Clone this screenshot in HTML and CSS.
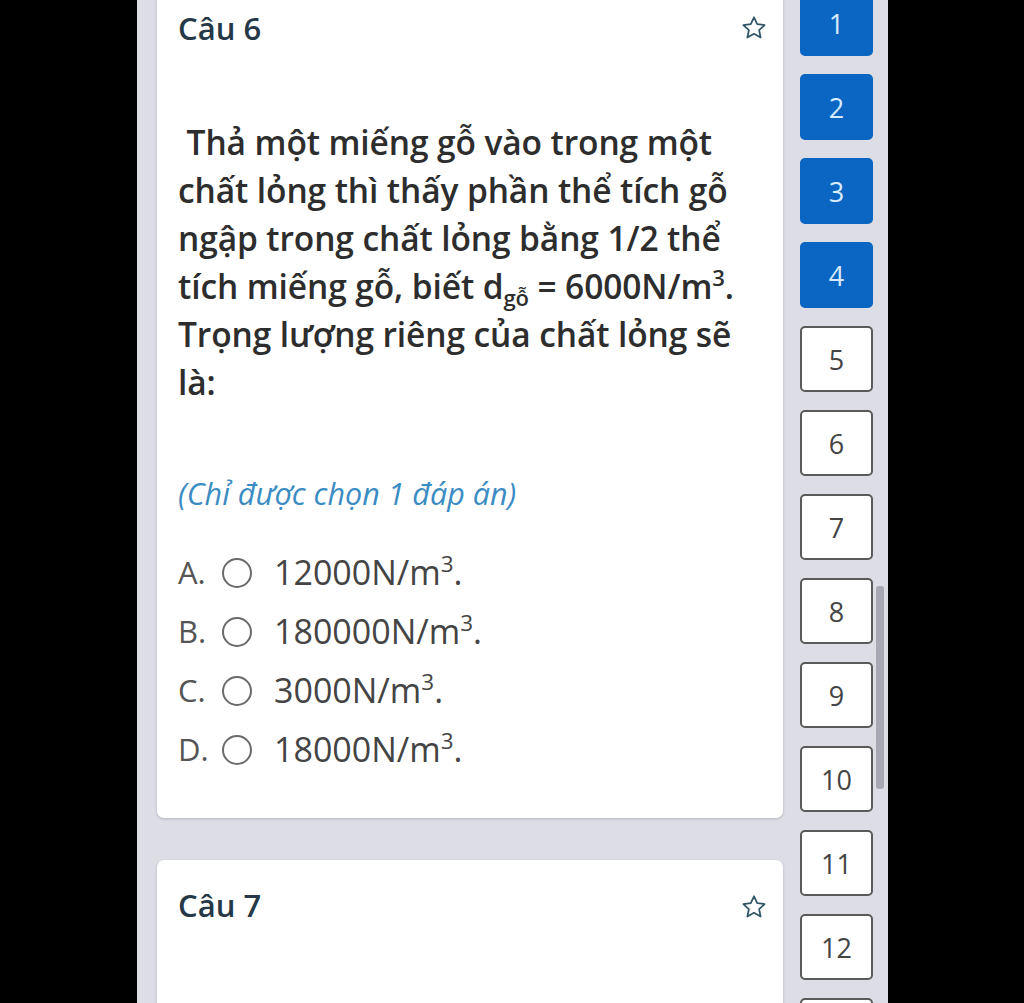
FILE: index.html
```html
<!DOCTYPE html>
<html lang="vi">
<head>
<meta charset="utf-8">
<link rel="stylesheet" href="styles.css">
</head>
<body>
<div class="frame">
  <div class="cards">
    <div class="card card-first">
      <div class="card-head">
        <span class="title">Câu 6</span>
        <svg class="star" viewBox="0 0 24 24" width="28" height="28"><path d="M12 2.8l2.75 5.9 6.35.75-4.7 4.4 1.25 6.3L12 17l-5.65 3.15 1.25-6.3-4.7-4.4 6.35-.75z" fill="none" stroke="#2f5566" stroke-width="1.5" stroke-linejoin="round"/></svg>
      </div>
      <p class="question">&nbsp;Thả một miếng gỗ vào trong một chất lỏng thì thấy phần thể tích gỗ ngập trong chất lỏng bằng 1/2 thể tích miếng gỗ, biết d<sub>gỗ</sub> = 6000N/m<sup>3</sup>. Trọng lượng riêng của chất lỏng sẽ là:</p>
      <p class="note">(Chỉ được chọn 1 đáp án)</p>
      <ul class="options">
        <li><span class="letter">A.</span><span class="radio"></span><span class="ans">12000N/m<sup>3</sup>.</span></li>
        <li><span class="letter">B.</span><span class="radio"></span><span class="ans">180000N/m<sup>3</sup>.</span></li>
        <li><span class="letter">C.</span><span class="radio"></span><span class="ans">3000N/m<sup>3</sup>.</span></li>
        <li><span class="letter">D.</span><span class="radio"></span><span class="ans">18000N/m<sup>3</sup>.</span></li>
      </ul>
    </div>
    <div class="card card-second">
      <div class="card-head">
        <span class="title">Câu 7</span>
        <svg class="star star-low" viewBox="0 0 24 24" width="28" height="28"><path d="M12 2.8l2.75 5.9 6.35.75-4.7 4.4 1.25 6.3L12 17l-5.65 3.15 1.25-6.3-4.7-4.4 6.35-.75z" fill="none" stroke="#2f5566" stroke-width="1.5" stroke-linejoin="round"/></svg>
      </div>
    </div>
  </div>
  <div class="side">
    <div class="num done">1</div>
    <div class="num done">2</div>
    <div class="num done">3</div>
    <div class="num done">4</div>
    <div class="num">5</div>
    <div class="num">6</div>
    <div class="num">7</div>
    <div class="num">8</div>
    <div class="num">9</div>
    <div class="num">10</div>
    <div class="num">11</div>
    <div class="num">12</div>
    <div class="num"></div>
  </div>
  <div class="scrollbar"></div>
</div>
</body>
</html>
```
FILE: styles.css
```css
html, body {
  margin: 0;
  padding: 0;
  background: #000;
  height: 1003px;
  overflow: hidden;
}
.frame {
  position: relative;
  margin-left: 137px;
  width: 751px;
  height: 1003px;
  background: #dcdde5;
  display: flex;
  overflow: hidden;
  font-family: "Open Sans", "Noto Sans", sans-serif;
}
.cards {
  margin-left: 20px;
  width: 626px;
  flex: 0 0 626px;
  display: flex;
  flex-direction: column;
  gap: 42px;
}
.card {
  background: #fff;
  border-radius: 7px;
  box-shadow: 0 1px 3px rgba(0,0,0,0.18);
  padding-left: 21px;
  padding-right: 15px;
  box-sizing: border-box;
}
.card-first {
  margin-top: -20px;
  padding-top: 28px;
  height: 838px;
  flex: 0 0 838px;
}
.card-second {
  padding-top: 25px;
  height: 200px;
  flex: 0 0 200px;
}
.card-head {
  display: flex;
  justify-content: space-between;
  align-items: flex-start;
}
.title {
  font-size: 31px;
  line-height: 40px;
  font-weight: 600;
  color: #253847;
}
.star {
  margin-top: 6px;
}
.star-low {
  margin-top: 8px;
}
.question {
  margin: 70px 0 0;
  font-size: 33.5px;
  line-height: 48px;
  font-weight: 600;
  color: #2d2d2d;
  padding-right: 11px;
  letter-spacing: -0.1px;
}
.question sub {
  font-size: 22px;
  vertical-align: -7px;
  line-height: 0;
}
.question sup, .ans sup {
  font-size: 0.66em;
  vertical-align: 0.6em;
  line-height: 0;
}
.note {
  margin: 67px 0 0;
  font-size: 30.5px;
  line-height: 40px;
  font-style: italic;
  color: #3c8cc4;
}
.options {
  list-style: none;
  margin: 37px 0 0;
  padding: 0;
  display: flex;
  flex-direction: column;
  gap: 15px;
}
.options li {
  display: flex;
  align-items: center;
  height: 44px;
}
.letter {
  font-size: 31px;
  color: #555;
  width: 44px;
}
.radio {
  width: 30px;
  height: 30px;
  border: 2px solid #6a6a6a;
  border-radius: 50%;
  box-sizing: border-box;
  margin-right: 22px;
  margin-top: 2px;
}
.ans {
  font-size: 34px;
  color: #444;
  font-weight: 400;
}
.side {
  margin-left: 17px;
  margin-top: -10px;
  width: 73px;
  flex: 0 0 73px;
  display: flex;
  flex-direction: column;
  gap: 18px;
}
.num {
  flex: 0 0 66px;
  box-sizing: border-box;
  border-radius: 5px;
  border: 2px solid #5a5a5a;
  background: #fff;
  color: #444;
  font-size: 27px;
  display: flex;
  align-items: center;
  justify-content: center;
}
.num.done {
  background: #0a66c2;
  border-color: #0a66c2;
  color: #d6ebff;
}
.scrollbar {
  position: absolute;
  left: 739px;
  top: 586px;
  width: 8px;
  height: 203px;
  border-radius: 3px;
  background: #a7a8b3;
}
```
